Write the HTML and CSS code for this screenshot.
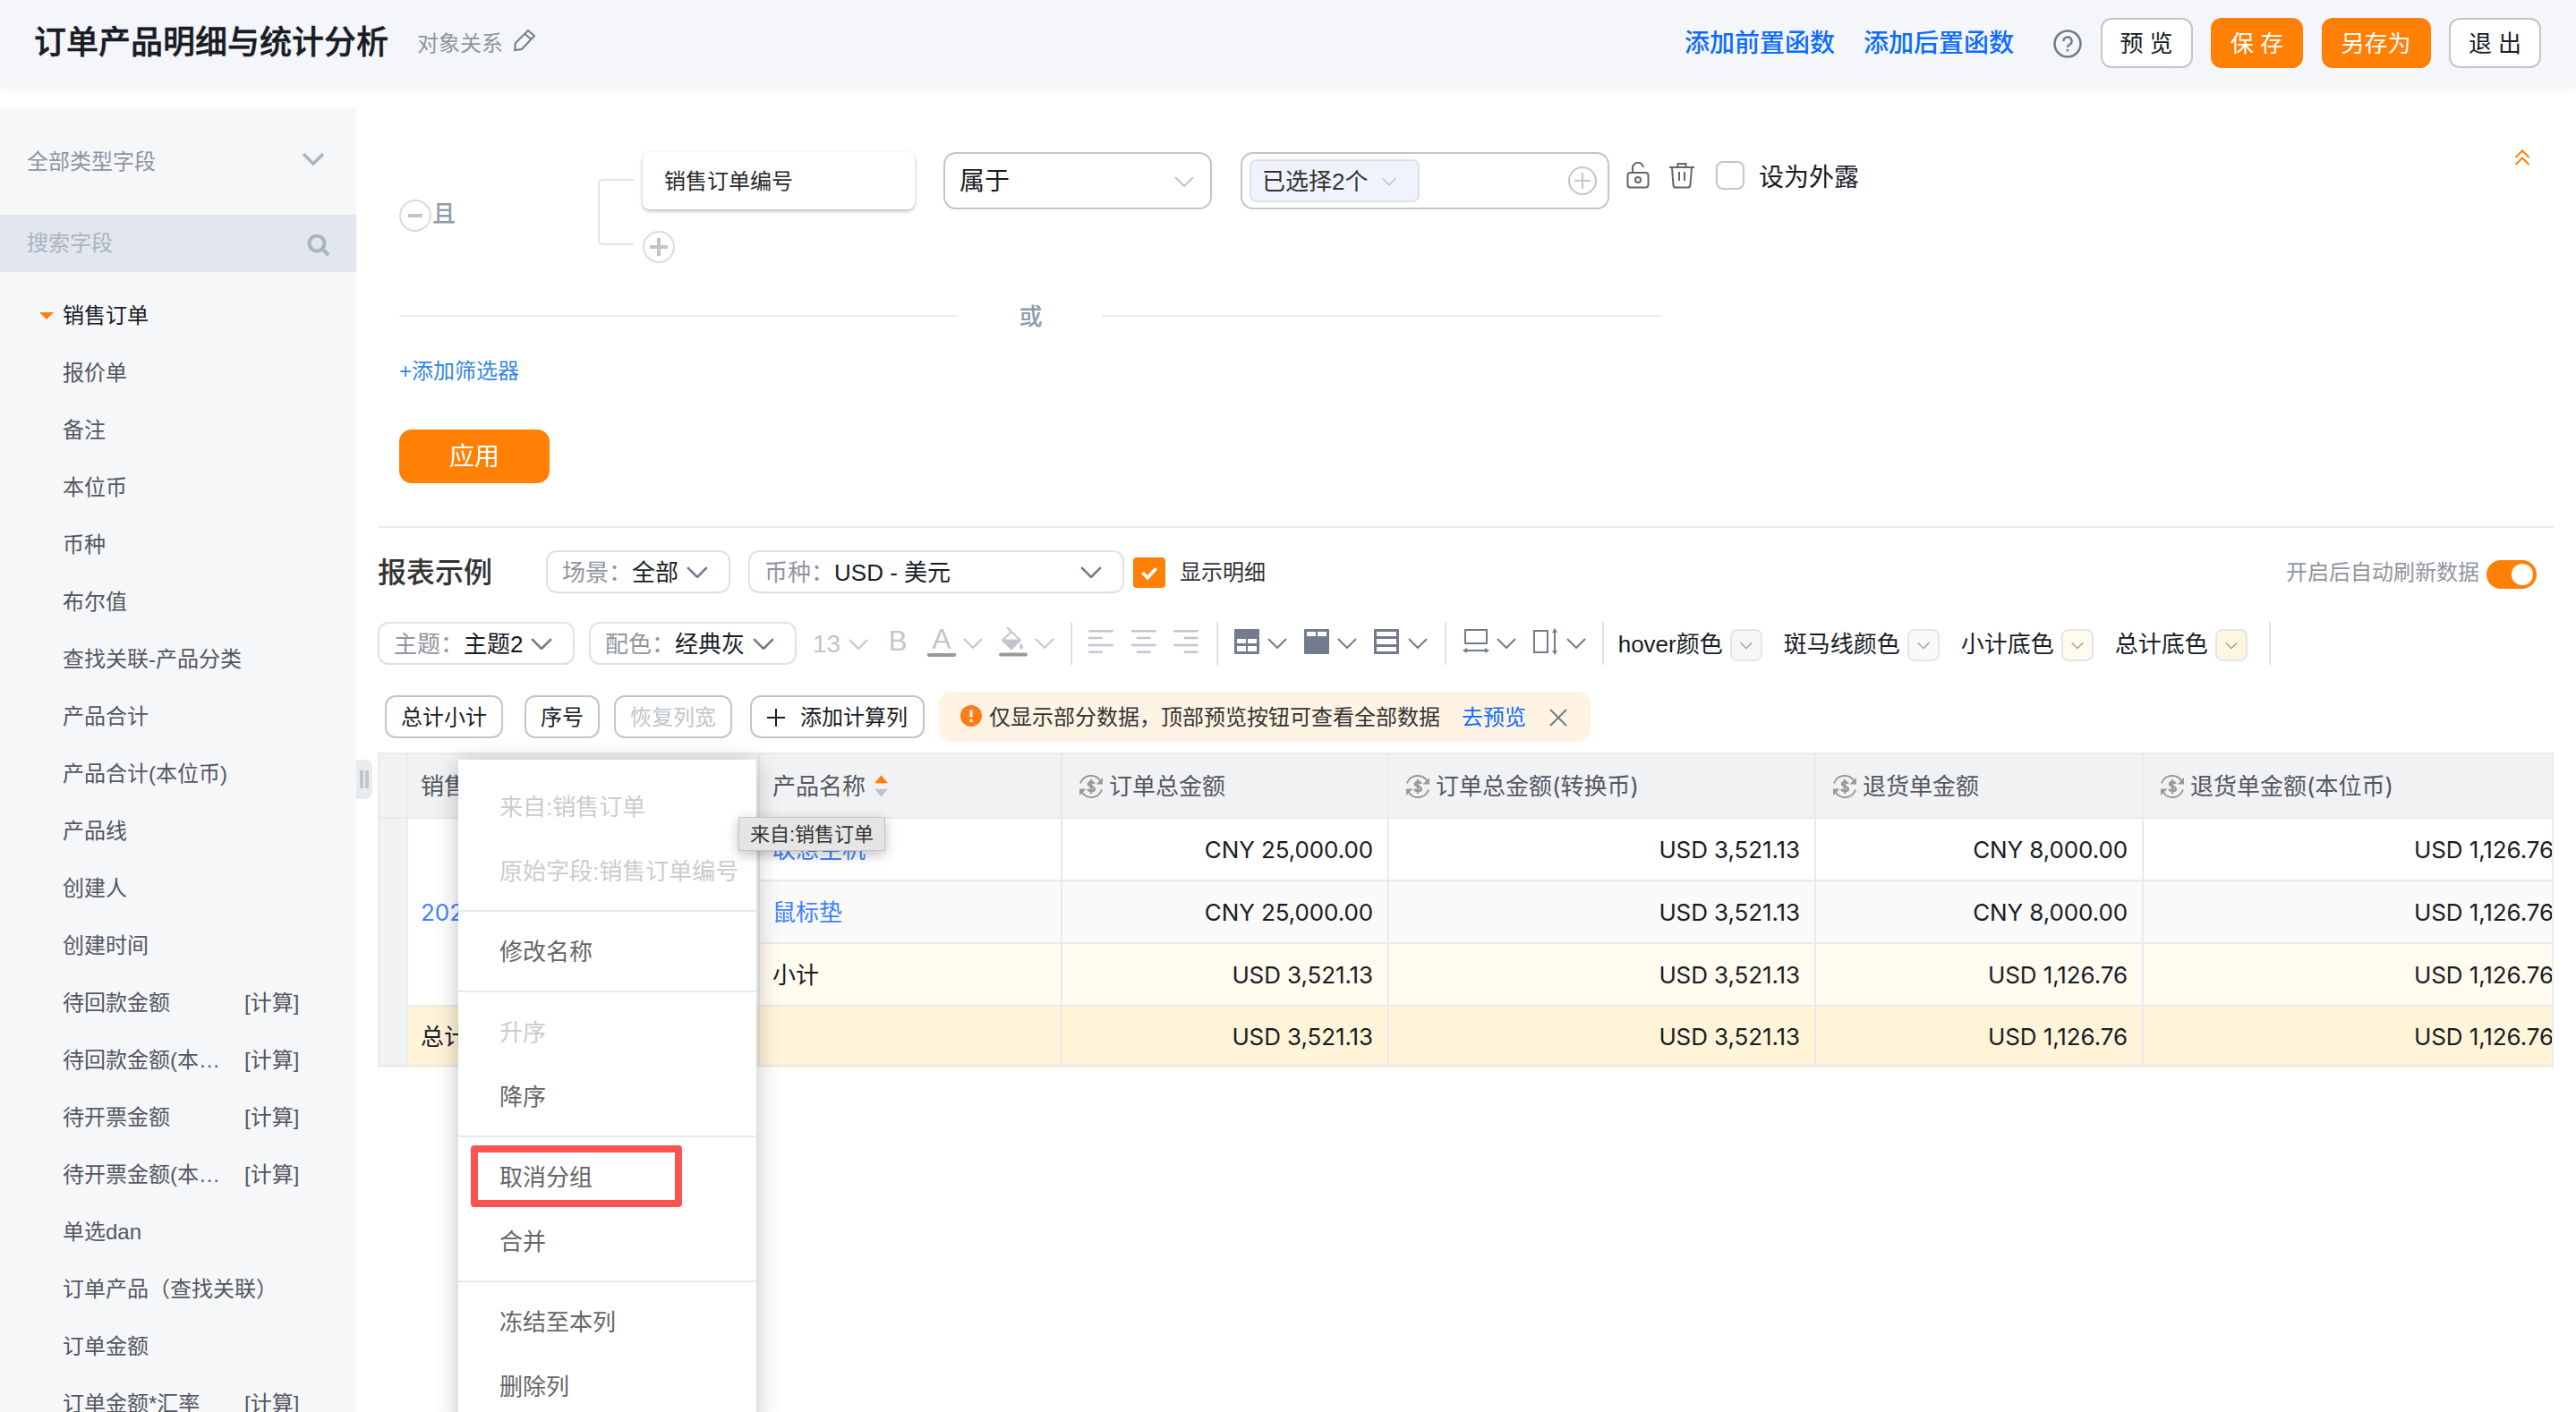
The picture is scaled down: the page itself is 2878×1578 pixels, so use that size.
FILE: index.html
```
<!DOCTYPE html>
<html lang="zh-CN">

<head>
    <meta charset="UTF-8">
    <meta name="viewport" content="width=device-width, initial-scale=1.0">
    <title>订单产品明细与统计分析</title>
    <link rel="stylesheet" href="styles.css">
</head>

<body>

    <!-- shared icons -->
    <svg class="sprite">
        <symbol id="down" viewBox="0 0 22 12"><path d="M1 1l10 10L21 1" /></symbol>
        <symbol id="money" viewBox="0 0 28 28">
            <path d="M2 10.500A12.500 12.500 0 0 1 24.500 8M26 17.500A12.500 12.500 0 0 1 3.500 20" />
            <path fill="currentColor" stroke="none" d="M27 4v7.500h-7.500zM1 24v-7.500h7.500z" />
            <path stroke-width="2.5" d="M17.500 11c-.5-2.500-6.500-2.700-6.500.3 0 3.200 6.800 2 6.800 5.400 0 3-6.500 3.200-7.300 0M14 6v16" />
        </symbol>
    </svg>

    <header class="header">
        <h1>订单产品明细与统计分析</h1>
        <span class="relation">对象关系</span>
        <svg class="pencil" viewBox="0 0 26 26"><path d="M2 24l1-8L17 2l7 6L10 23zM13.500 6l7 6" /></svg>
        <div class="header-right">
            <a class="fn-link">添加前置函数</a>
            <a class="fn-link">添加后置函数</a>
            <svg class="help" viewBox="0 0 32 32"><circle cx="16" cy="16" r="14.500" /><path d="M11.500 13a4.500 4.500 0 1 1 6.500 4c-1.500.8-2 1.500-2 3M16 22v2.500" /></svg>
            <button class="btn">预 览</button>
            <button class="btn primary">保 存</button>
            <button class="btn primary wide">另存为</button>
            <button class="btn">退 出</button>
        </div>
    </header>

    <div class="page">
        <aside class="sidebar">
            <div class="type-select">全部类型字段<svg viewBox="0 0 26 16"><path d="M2 2l11 11L24 2" /></svg></div>
            <div class="search">搜索字段<svg viewBox="0 0 26 26"><circle cx="11" cy="11" r="8.500" /><path d="M17 17l7 7" /></svg></div>
            <ul class="fields">
                <li class="root">销售订单</li>
                <li>报价单</li>
                <li>备注</li>
                <li>本位币</li>
                <li>币种</li>
                <li>布尔值</li>
                <li>查找关联-产品分类</li>
                <li>产品合计</li>
                <li>产品合计(本位币)</li>
                <li>产品线</li>
                <li>创建人</li>
                <li>创建时间</li>
                <li><span>待回款金额</span><em>[计算]</em></li>
                <li><span>待回款金额(本…</span><em>[计算]</em></li>
                <li><span>待开票金额</span><em>[计算]</em></li>
                <li><span>待开票金额(本…</span><em>[计算]</em></li>
                <li>单选dan</li>
                <li>订单产品（查找关联）</li>
                <li>订单金额</li>
                <li><span>订单金额*汇率</span><em>[计算]</em></li>
            </ul>
        </aside>
        <div class="handle"></div>

        <main class="main">
            <section class="filter">
                <div class="cond">
                    <div class="logic">
                        <svg class="round" viewBox="0 0 36 36"><circle cx="18" cy="18" r="17" /><path d="M10 18h16" /></svg>
                        <b>且</b>
                    </div>
                    <div class="bracket"></div>
                    <div class="cond-field">
                        <div class="card">销售订单编号</div>
                        <svg class="round" viewBox="0 0 36 36"><circle cx="18" cy="18" r="17" /><path d="M8 18h20M18 8v20" /></svg>
                    </div>
                    <div class="operator">属于<svg class="chev"><use href="#down" /></svg></div>
                    <div class="values">
                        <span class="tag">已选择2个<svg class="chev"><use href="#down" /></svg></span>
                        <svg class="add-value" viewBox="0 0 32 32"><circle cx="16" cy="16" r="15" /><path d="M7 16h18M16 7v18" /></svg>
                    </div>
                    <svg class="lock" viewBox="0 0 26 30"><rect x="1.500" y="12" width="23" height="16.500" rx="3" /><path d="M7 12V7.500a6 6 0 0 1 12-1.500" /><circle cx="13" cy="20" r="3" /></svg>
                    <svg class="trash" viewBox="0 0 28 30"><path d="M0 6h28M9.500 5.500V2h9v3.500M3 6l1.500 20a3 3 0 0 0 3 2.500h13a3 3 0 0 0 3-2.500L25 6M11 11v10M17 11v10" /></svg>
                    <span class="check"></span>
                    <span class="expose">设为外露</span>
                    <svg class="collapse" viewBox="0 0 18 18"><path d="M1.500 9L9 1.500 16.500 9M1.500 17L9 9.500l7.500 7.500" /></svg>
                </div>
                <div class="or"><i></i><b>或</b><i></i></div>
                <a class="add-filter">+添加筛选器</a>
                <button class="apply">应用</button>
            </section>

            <section class="report">
                <div class="bar title-bar">
                    <h2>报表示例</h2>
                    <div class="select scene"><label>场景：</label>全部<svg class="chev"><use href="#down" /></svg></div>
                    <div class="select currency"><label>币种：</label>USD - 美元<svg class="chev"><use href="#down" /></svg></div>
                    <svg class="checked" viewBox="0 0 36 36"><path d="M10 18l6 6 10-11" /></svg>
                    <span class="detail">显示明细</span>
                    <span class="auto">开启后自动刷新数据</span>
                    <span class="switch"></span>
                </div>

                <div class="bar tools">
                    <div class="selects">
                        <div class="select theme"><label>主题：</label>主题2<svg class="chev"><use href="#down" /></svg></div>
                        <div class="select color"><label>配色：</label>经典灰<svg class="chev"><use href="#down" /></svg></div>
                    </div>
                    <div class="tool off size">13<svg class="chev"><use href="#down" /></svg></div>
                    <div class="tool off bold">B</div>
                    <div class="tool off"><span class="letter">A</span><svg class="chev"><use href="#down" /></svg></div>
                    <div class="tool off">
                        <svg class="bucket" viewBox="0 0 32 34">
                            <path class="line" d="M9 1l5 5 10 9.500L14 25 4 15.500 14 6" /><path class="solid" d="M4 14.500h20L14 25zM25 18.500c4 6.500 1 7 0 7s-4-.5 0-7z" /><path class="under" d="M2 31.500h28" />
                        </svg>
                        <svg class="chev"><use href="#down" /></svg>
                    </div>
                    <i class="split"></i>
                    <svg class="align" viewBox="0 0 30 30"><path d="M1 3h26M1 11h14M1 19h26M1 27h14" /></svg>
                    <svg class="align" viewBox="0 0 30 30"><path d="M1 3h26M7 11h14M1 19h26M7 27h14" /></svg>
                    <svg class="align" viewBox="0 0 30 30"><path d="M1 3h26M13 11h14M1 19h26M13 27h14" /></svg>
                    <i class="split"></i>
                    <div class="tool cell">
                        <svg viewBox="0 0 28 28"><rect width="28" height="28" rx="1" /><path class="hole" d="M3 11h10v5H3zM15 11h10v5H15zM3 19h10v6H3zM15 19h10v6H15z" /></svg>
                        <svg class="chev"><use href="#down" /></svg>
                    </div>
                    <div class="tool cell">
                        <svg viewBox="0 0 28 28"><rect width="28" height="28" rx="1" /><path class="hole" d="M3 3h10v5H3zM15 3h10v5H15z" /></svg>
                        <svg class="chev"><use href="#down" /></svg>
                    </div>
                    <div class="tool cell">
                        <svg viewBox="0 0 28 28"><rect width="28" height="28" rx="1" /><path class="hole" d="M3 3h22v5H3zM3 11h22v6H3zM3 20h22v5H3z" /></svg>
                        <svg class="chev"><use href="#down" /></svg>
                    </div>
                    <i class="split"></i>
                    <div class="tool">
                        <svg class="dim" viewBox="0 0 30 30"><rect x="3" y="2" width="24" height="15" /><path d="M2 25h26" /><path class="solid" d="M0 25l5-3v6zM30 25l-5-3v6z" /></svg>
                        <svg class="chev"><use href="#down" /></svg>
                    </div>
                    <div class="tool">
                        <svg class="dim" viewBox="0 0 30 30"><rect x="2" y="3" width="15" height="24" /><path d="M25 2v26" /><path class="solid" d="M25 0l3 5h-6zM25 30l3-5h-6z" /></svg>
                        <svg class="chev"><use href="#down" /></svg>
                    </div>
                    <i class="split"></i>
                    <div class="swatches">
                        <div>hover颜色<span class="swatch gray"><svg><use href="#down" /></svg></span></div>
                        <div>斑马线颜色<span class="swatch zebra"><svg><use href="#down" /></svg></span></div>
                        <div>小计底色<span class="swatch sub"><svg><use href="#down" /></svg></span></div>
                        <div>总计底色<span class="swatch total"><svg><use href="#down" /></svg></span></div>
                    </div>
                    <i class="split last"></i>
                </div>

                <div class="bar actions">
                    <button>总计小计</button>
                    <button class="seq">序号</button>
                    <button class="disabled">恢复列宽</button>
                    <button class="calc"><svg viewBox="0 0 20 20"><path d="M0 10h20M10 0v20" /></svg>添加计算列</button>
                    <div class="tip">
                        <svg class="warn" viewBox="0 0 24 24"><circle cx="12" cy="12" r="12" /><path d="M12 5.500v8M12 16v3" /></svg>
                        仅显示部分数据，顶部预览按钮可查看全部数据
                        <a>去预览</a>
                        <svg class="close" viewBox="0 0 20 20"><path d="M1 1l18 18M19 1L1 19" /></svg>
                    </div>
                </div>

                <div class="table-wrap">
                    <table>
                        <colgroup>
                            <col class="c0"><col class="c1"><col class="c2"><col class="c3"><col class="c4"><col class="c5"><col class="c6">
                        </colgroup>
                        <tr class="head">
                            <th></th>
                            <th>销售订单编号</th>
                            <th><div class="th">产品名称<svg class="sort" viewBox="0 0 16 26"><path class="up" d="M8 0l8 9.500H0z" /><path class="dn" d="M8 26l8-9.500H0z" /></svg></div></th>
                            <th><div class="th"><svg class="money"><use href="#money" /></svg>订单总金额</div></th>
                            <th><div class="th"><svg class="money"><use href="#money" /></svg>订单总金额(转换币)</div></th>
                            <th><div class="th"><svg class="money"><use href="#money" /></svg>退货单金额</div></th>
                            <th><div class="th"><svg class="money"><use href="#money" /></svg>退货单金额(本位币)</div></th>
                        </tr>
                        <tr>
                            <td class="index" rowspan="4"></td>
                            <td class="link" rowspan="3">202</td>
                            <td class="link">联想主机</td>
                            <td class="num">CNY 25,000.00</td>
                            <td class="num">USD 3,521.13</td>
                            <td class="num">CNY 8,000.00</td>
                            <td class="num">USD 1,126.76</td>
                        </tr>
                        <tr class="zebra">
                            <td class="link">鼠标垫</td>
                            <td class="num">CNY 25,000.00</td>
                            <td class="num">USD 3,521.13</td>
                            <td class="num">CNY 8,000.00</td>
                            <td class="num">USD 1,126.76</td>
                        </tr>
                        <tr class="sub">
                            <td>小计</td>
                            <td class="num">USD 3,521.13</td>
                            <td class="num">USD 3,521.13</td>
                            <td class="num">USD 1,126.76</td>
                            <td class="num">USD 1,126.76</td>
                        </tr>
                        <tr class="total">
                            <td>总计</td>
                            <td></td>
                            <td class="num">USD 3,521.13</td>
                            <td class="num">USD 3,521.13</td>
                            <td class="num">USD 1,126.76</td>
                            <td class="num">USD 1,126.76</td>
                        </tr>
                    </table>
                </div>
            </section>
        </main>
    </div>

    <!-- column context menu -->
    <div class="menu">
        <ul>
            <li class="off">来自:销售订单</li>
            <li class="off">原始字段:销售订单编号</li>
        </ul>
        <ul>
            <li>修改名称</li>
        </ul>
        <ul>
            <li class="off">升序</li>
            <li>降序</li>
        </ul>
        <ul>
            <li class="marked">取消分组</li>
            <li>合并</li>
        </ul>
        <ul>
            <li>冻结至本列</li>
            <li>删除列</li>
        </ul>
    </div>
    <div class="tooltip">来自:销售订单</div>

</body>

</html>
```
FILE: styles.css
```
*,
*::before,
*::after {
    box-sizing: border-box;
}

body {
    margin: 0;
    height: 1578px;
    overflow: hidden;
    position: relative;
    background: #fff;
    color: #181c25;
    font-family: "Liberation Sans", "Noto Sans CJK SC", sans-serif;
    font-size: 26px;
    line-height: 36px;
}

h1, h2, ul {
    margin: 0;
    padding: 0;
    list-style: none;
}

svg {
    flex: none;
    fill: none;
    stroke: currentColor;
    stroke-width: 2;
}

button {
    font: inherit;
    color: inherit;
    padding: 2px 0 0;
    background: #fff;
    border: 2px solid #c1c5ce;
    border-radius: 12px;
}

.sprite {
    position: absolute;
    width: 0;
    height: 0;
}

.chev {
    width: 22px;
    height: 12px;
}

/* header */
.header {
    height: 97px;
    padding: 0 39px 2px 38px;
    display: flex;
    align-items: center;
    background: #f4f6fa;
    box-shadow: 0 2px 10px rgba(0, 0, 0, 0.06);
}

.header h1 {
    padding-top: 1px;
    font-size: 36px;
    line-height: 48px;
    font-weight: 500;
    -webkit-text-stroke: 0.5px;
}

.relation {
    margin-left: 32px;
    padding-top: 2px;
    font-size: 24px;
    color: #91959e;
}

.pencil {
    width: 26px;
    height: 26px;
    margin: -5px 0 0 11px;
    color: #737c8c;
}

.header-right {
    margin-left: auto;
    display: flex;
    align-items: center;
}

.fn-link {
    padding-top: 2px;
    font-size: 28px;
    font-weight: 500;
    color: #0c6cff;
    margin-right: 32px;
}

.help {
    width: 32px;
    height: 32px;
    margin: 2px 0 0 12px;
    color: #737c8c;
    stroke-width: 2.5;
}

.btn {
    width: 103px;
    height: 56px;
    margin-left: 20.500px;
    padding-top: 2px;
    font-size: 26px;
}

.btn.primary,
.apply {
    color: #fff;
    background: #ff8005;
    border: none;
}

.btn.wide {
    width: 122px;
}

/* sidebar */
.page {
    display: flex;
    height: 1481px;
}

.sidebar {
    width: 398px;
    margin-top: 23px;
    flex: none;
    overflow: hidden;
    background: #f5f7f9;
    font-size: 24px;
    color: #545861;
}

.type-select,
.search {
    display: flex;
    justify-content: space-between;
    align-items: center;
    height: 120px;
    padding: 2px 35px 0 30px;
    color: #91959e;
}

.type-select svg {
    width: 26px;
    height: 16px;
    color: #aab6be;
    stroke-width: 3.500;
    margin-top: -6px;
}

.search {
    height: 64px;
    padding-right: 29px;
    padding-top: 0;
    background: #e1e6ef;
    color: #a9b4c0;
}

.search svg {
    width: 26px;
    height: 26px;
    margin-top: 4px;
    stroke-width: 4;
}

.fields {
    padding-top: 17px;
}

.fields li {
    height: 64px;
    line-height: 64px;
    padding-left: 70px;
    display: flex;
    white-space: nowrap;
}

.fields span {
    width: 203px;
}

.fields em {
    font-style: normal;
}

.fields .root {
    color: #181c25;
    padding-left: 44px;
    align-items: center;
}

.fields .root::before {
    content: "";
    border: 8px solid transparent;
    border-top: 8px solid #ff8005;
    border-bottom: none;
    margin-right: 10px;
}

.handle {
    width: 18px;
    height: 44px;
    margin: 752px 6px 0 0;
    flex: none;
    display: flex;
    align-items: center;
    padding-left: 4px;
    background: #e9ebef;
    border-radius: 0 8px 8px 0;
}

.handle::before {
    content: "";
    width: 10px;
    height: 20px;
    border: solid #c1c5ce;
    border-width: 0 4px;
}

/* filter */
.main {
    flex: 1;
    min-width: 0;
    padding-right: 25px;
}

.filter {
    padding: 73px 0 48px 24px;
    border-bottom: 2px solid #ebecee;
}

.cond {
    display: flex;
    height: 124px;
}

.logic {
    width: 222px;
    padding-top: 53px;
    display: flex;
}

.round {
    display: block;
    width: 36px;
    height: 36px;
    color: #dcdcdc;
}

.round path {
    stroke: #c4c4c4;
    stroke-width: 4;
}

.logic b,
.or b {
    font-weight: 500;
    font-size: 26px;
    line-height: 28px;
    color: #8e9dab;
    padding: 2px 0 0 1px;
}

.bracket {
    width: 40px;
    height: 74px;
    margin: 30px 10px 0 0;
    border: 2px solid #e2e2e2;
    border-right: none;
    border-radius: 6px 0 0 6px;
}

.card {
    width: 304px;
    height: 64px;
    margin-bottom: 24px;
    padding: 15px 24px 11px;
    font-size: 24px;
    color: #2a2a2a;
    border-radius: 8px;
    box-shadow: 0 2px 4px rgba(0, 0, 0, 0.28);
}

.operator,
.values {
    width: 300px;
    height: 64px;
    margin-left: 32px;
    padding: 1px 18px 0 16px;
    display: flex;
    align-items: center;
    justify-content: space-between;
    border: 2px solid #c1c5ce;
    border-radius: 14px;
    font-size: 28px;
}

.operator .chev,
.tag .chev {
    color: #c1c5ce;
}

.values {
    width: 412px;
    padding: 0 12px 0 8px;
}

.tag {
    width: 190px;
    height: 48px;
    padding: 1px 24px 0 12px;
    display: flex;
    align-items: center;
    justify-content: space-between;
    background: #f0f3fc;
    border: 2px solid #dee1e8;
    border-radius: 8px;
    font-size: 26px;
    color: #333;
}

.tag .chev {
    width: 16px;
    height: 10px;
}

.add-value {
    width: 32px;
    height: 32px;
    color: #c1c5ce;
}

.lock,
.trash {
    width: 26px;
    height: 30px;
    margin: 11px 0 0 19px;
    color: #666;
}

.trash {
    width: 28px;
    margin-left: 22px;
}

.check {
    width: 32px;
    height: 32px;
    margin: 10px 16px 0 24px;
    border: 2px solid #c1c5ce;
    border-radius: 8px;
}

.expose {
    font-size: 28px;
    margin-top: 11px;
}

.collapse {
    width: 18px;
    height: 18px;
    margin: -3px 26px 0 auto;
    color: #ff8005;
}

.or {
    width: 1410px;
    height: 40px;
    margin-top: 39px;
    display: flex;
    align-items: center;
    justify-content: space-between;
}

.or i {
    width: 625px;
    height: 2px;
    background: #ededed;
}

.add-filter {
    display: block;
    margin: 24px 0 47px;
    font-size: 24px;
    color: #3487e2;
}

.apply {
    display: block;
    width: 168px;
    height: 60px;
    border-radius: 14px;
    font-size: 28px;
}

/* report bars */
.bar {
    display: flex;
    align-items: center;
    height: 48px;
    white-space: nowrap;
}

.title-bar {
    margin-top: 25px;
}

.title-bar h2 {
    width: 188px;
    padding-top: 2px;
    font-size: 32px;
    line-height: 46px;
    font-weight: 500;
    color: #333;
}

.select {
    height: 48px;
    padding: 1px 23px 0 16px;
    display: flex;
    align-items: center;
    border: 2px solid #dee1e8;
    border-radius: 12px;
}

.select label {
    color: #91959e;
}

.select .chev {
    width: 24px;
    height: 13px;
    margin-left: auto;
    color: #737c8c;
    stroke-width: 2.500;
}

.scene {
    width: 206px;
}

.currency {
    width: 420px;
    margin: 0 10px 0 20px;
}

.checked {
    width: 36px;
    height: 34px;
    margin-top: 2px;
    background: #ff8005;
    border-radius: 4px;
    color: #fff;
    stroke-width: 4;
}

.detail {
    margin-left: 16px;
    padding-top: 2px;
    font-size: 24px;
    color: #333;
}

.auto {
    margin-left: auto;
    padding-top: 2px;
    font-size: 24px;
    color: #91959e;
}

.switch {
    width: 56px;
    height: 32px;
    margin: 6px 19px 0 8px;
    padding: 4px;
    border-radius: 16px;
    background: #ff8005;
}

.switch::before {
    content: "";
    display: block;
    width: 24px;
    height: 24px;
    margin-left: auto;
    border-radius: 50%;
    background: #fff;
}

.tools {
    margin-top: 32px;
    gap: 18px;
}

.selects {
    display: flex;
    gap: 16px;
}

.theme {
    width: 220px;
}

.color {
    width: 232px;
}

.tool {
    display: flex;
    align-items: center;
    justify-content: space-between;
    width: 60px;
    height: 34px;
    color: #737c8c;
    stroke-width: 2.500;
}

.tool.off {
    width: 62px;
    color: #c1c5ce;
}

.tool.size,
.tool.bold {
    font-size: 28px;
}

.tool.size {
    padding-top: 2px;
}

.tool.bold {
    width: 30px;
    font-size: 31px;
    justify-content: center;
    margin-top: -4px;
}

.tool.cell {
    width: 60.400px;
}

.cell .chev {
    margin-right: 1px;
}

.letter {
    width: 32px;
    height: 34px;
    margin-top: -5px;
    font-size: 32px;
    line-height: 29px;
    text-align: center;
    border-bottom: 4px solid #999;
    border-radius: 2px;
}

.bucket {
    width: 32px;
    height: 34px;
    margin-top: -5px;
}

.solid {
    fill: currentColor;
    stroke: none;
}

.under {
    stroke: #999;
    stroke-width: 4;
    stroke-linecap: round;
}

.split {
    width: 2px;
    height: 48px;
    background: #dee1e6;
}

.split.last {
    margin-left: 6px;
}

.align {
    width: 29.500px;
    height: 30px;
    margin-top: -4px;
    color: #c1c5ce;
    stroke-width: 2.500;
    stroke-linecap: round;
}

.cell svg:first-child {
    width: 28px;
    height: 28px;
    margin-top: -4px;
    fill: #737c8c;
    stroke: none;
}

.hole {
    fill: #fff;
}

.dim {
    width: 30px;
    height: 30px;
    margin-top: -4px;
}

.swatches {
    display: flex;
    gap: 24px;
    margin-left: -2px;
    padding-top: 2px;
}

.swatches div {
    display: flex;
    align-items: center;
    gap: 8px;
}

.swatch {
    width: 36px;
    height: 36px;
    margin-top: 2px;
    display: flex;
    align-items: center;
    justify-content: center;
    border: 2px solid #e4e5e7;
    border-radius: 8px;
}

.swatch svg {
    width: 14px;
    height: 9px;
    color: #999;
}

.gray {
    background: #f6f6f6;
}

.swatch.zebra {
    background: #fafafa;
}

.swatch.sub {
    background: #fffbef;
}

.swatch.total {
    background: #fff6e0;
}

.actions {
    height: 56px;
    margin-top: 30px;
    padding-left: 8px;
    font-size: 24px;
}

.actions button {
    width: 132px;
    height: 48px;
}

.actions .seq {
    width: 84px;
    margin: 0 16px 0 24px;
}

.actions .disabled {
    color: #c1c5ce;
}

.actions .calc {
    width: 195px;
    margin: 0 16px 0 20px;
    display: flex;
    align-items: center;
    justify-content: center;
    gap: 17px;
}

.calc svg {
    width: 20px;
    height: 20px;
}

.tip {
    width: 728px;
    height: 56px;
    padding: 1px 26px 0 24px;
    display: flex;
    align-items: center;
    background: #fff3e4;
    border-radius: 14px;
    color: #333;
}

.warn {
    width: 24px;
    height: 24px;
    margin: -3px 8px 0 0;
    fill: #ff7c19;
    stroke: none;
}

.warn path {
    stroke: #fff;
    stroke-width: 3;
}

.tip a {
    margin: 0 auto 0 24px;
    color: #0c6cff;
}

.close {
    width: 20px;
    height: 20px;
    color: #737c8c;
}

/* table */
.table-wrap {
    width: 2431px;
    height: 352px;
    margin-top: 12px;
    overflow: hidden;
    border: solid #e8eaee;
    border-width: 2px 2px 0;
    background: #fff4d8;
}

table {
    width: 2447px;
    table-layout: fixed;
    border-collapse: separate;
    border-spacing: 0;
    font-family: Inter, "Noto Sans CJK SC", sans-serif;
}

.c0 { width: 32px; }
.c1 { width: 393px; }
.c2 { width: 338px; }
.c3 { width: 365px; }
.c4 { width: 477px; }
.c5 { width: 366px; }
.c6 { width: 476px; }

th, td {
    height: 70px;
    padding: 1px 16px 0 14px;
    text-align: left;
    white-space: nowrap;
    font-weight: 400;
    background: #fff;
    border: solid #e8eaee;
    border-width: 0 2px 2px 0;
}

th {
    height: 72px;
    background: #f1f2f4;
    color: #545861;
}

.th {
    display: flex;
    align-items: center;
}

.sort {
    width: 15px;
    height: 25px;
    margin-left: 10px;
    stroke: none;
}

.up {
    fill: #ff8005;
}

.dn {
    fill: #c1c5ce;
}

.money {
    width: 28px;
    height: 28px;
    margin: 0 6px 0 4px;
    color: #999;
}

td.index {
    background: #f1f2f4;
}

.link {
    color: #3f82ff;
}

td.num {
    text-align: right;
    letter-spacing: -0.1px;
}

tr.zebra td {
    background: #fafafa;
}

tr.sub td {
    background: #fffbef;
}

tr.total td {
    height: 67px;
    padding-top: 3px;
    background: #fff4d8;
}

/* floating layers */
.menu {
    position: absolute;
    left: 512px;
    top: 849px;
    width: 333px;
    padding-top: 8px;
    background: #fff;
    color: #666;
    box-shadow: 0 4px 24px rgba(0, 0, 0, 0.25);
}

.menu ul {
    padding: 8px 0;
    border-bottom: 2px solid #e4e8f2;
}

.menu li {
    height: 72px;
    line-height: 74px;
    padding-left: 46px;
    white-space: nowrap;
    position: relative;
}

.menu .off {
    color: #ccc;
}

.marked::after {
    content: "";
    position: absolute;
    left: 14px;
    top: 1px;
    width: 236px;
    height: 69px;
    border: 8px solid #fc5252;
    border-radius: 4px;
}

.tooltip {
    position: absolute;
    left: 825px;
    top: 913px;
    width: 164px;
    height: 38px;
    padding: 1px 0 0 12px;
    background: #e5e5e5;
    border: 1px solid #c4c4c4;
    box-shadow: 0 4px 14px rgba(0, 0, 0, 0.25);
    font-size: 22px;
    color: #333;
}
```
